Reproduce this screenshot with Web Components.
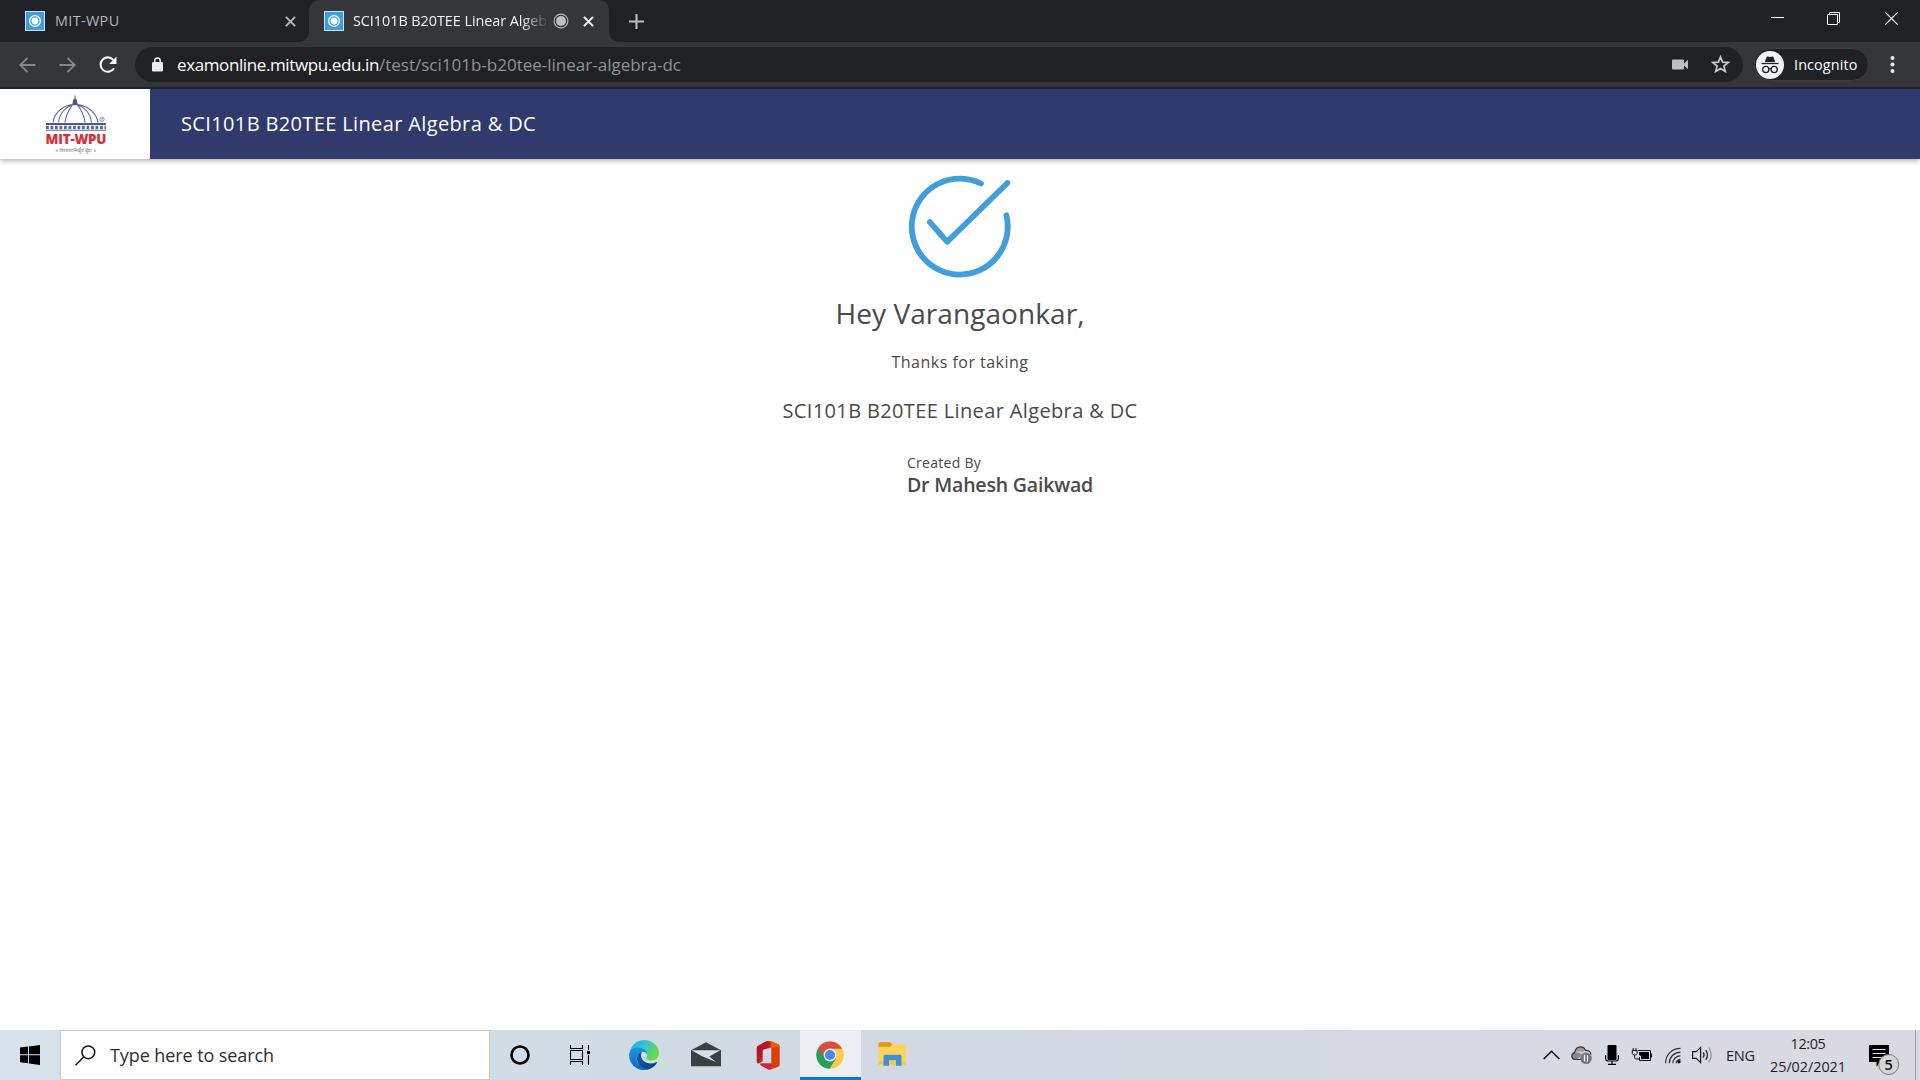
<!DOCTYPE html>
<html lang="en">
<head>
<meta charset="utf-8">
<title>SCI101B B20TEE Linear Algebra &amp; DC</title>
<style>
html,body{margin:0;height:100%;overflow:hidden;background:#fff}
body{font-family:"Open Sans","Noto Sans",sans-serif}
</style>
</head>
<body>
<desktop-screen></desktop-screen>
<script>
const define = (name, css, html) => customElements.define(name, class extends HTMLElement {
  constructor() {
    super();
    this.attachShadow({ mode: 'open' }).innerHTML =
      `<style>*{box-sizing:border-box}svg{display:block;flex:none;overflow:visible}${css}</style>${html}`;
  }
});

// One line of text, tracked so that it fills the width given in "w".
customElements.define('fit-text', class extends HTMLElement {
  constructor() {
    super();
    this.attachShadow({ mode: 'open' }).innerHTML =
      '<style>:host{display:inline-block;flex:none;white-space:nowrap}</style><slot></slot>';
  }
  connectedCallback() {
    const target = parseFloat(this.getAttribute('w'));
    if (!target) return;
    this.style.letterSpacing = '0px';
    this.style.width = 'max-content';
    const natural = this.getBoundingClientRect().width;
    this.style.letterSpacing = ((target - natural) / this.textContent.length).toFixed(3) + 'px';
    this.style.width = target + 'px';
  }
});

define('fav-icon', ':host{display:block;flex:none;width:20px;height:20px}',
`<svg width="20" height="20" viewBox="0 0 20 20"><rect x=".5" y=".5" width="19" height="19" fill="#3f9ddd" stroke="#c8e2f5"/><circle cx="10" cy="10" r="5.4" fill="none" stroke="#fff" stroke-width="1.3"/><circle cx="10" cy="10" r="3.4" fill="#fff"/></svg>`);

define('tab-close', ':host{display:block;flex:none;width:11px;height:11px}',
`<svg width="11" height="11" viewBox="0 0 11 11"><path d="M.9.9l9.2 9.2M10.100.9l-9.2 9.200" stroke="currentColor" stroke-width="2"/></svg>`);

define('tab-strip', `
:host{display:flex;height:42px;background:#202124;color:#b4b7bb;font-size:14.4px}
.tab{display:flex;align-items:center;height:42px;flex:none}
.tab fit-text{padding-bottom:1px}
.idle{width:309px;padding:0 13px 0 25px}
.idle fit-text{margin-left:10px;margin-right:auto}
.active{width:300px;background:#35363a;border-radius:10px 10px 0 0;color:#f2f3f4;padding:0 15px 0 15px;position:relative}
.active::before,.active::after{content:"";position:absolute;bottom:0;width:10px;height:10px}
.active::before{left:-10px;background:radial-gradient(circle at 0 0,#202124 9.500px,#35363a 10.2px)}
.active::after{right:-10px;background:radial-gradient(circle at 100% 0,#202124 9.500px,#35363a 10.2px)}
.title{width:193px;margin-left:9px;overflow:hidden;-webkit-mask-image:linear-gradient(90deg,#000 168px,transparent 196px);mask-image:linear-gradient(90deg,#000 168px,transparent 196px)}
.title fit-text{display:block}
.rec{margin-left:7px}
.active tab-close{margin-left:14px;color:#f4f5f6}
.plus{margin:14px 0 0 20px}
.win{display:flex;margin-left:auto;padding:12px 22px 0 0;gap:44px}
.win svg:first-child{margin-right:-1px}
.win svg:last-child{margin-left:1px}
`,
`<div class="tab idle"><fav-icon></fav-icon><fit-text w="64.500">MIT-WPU</fit-text><tab-close></tab-close></div>
<div class="tab active"><fav-icon></fav-icon><div class="title"><fit-text w="194">SCI101B B20TEE Linear Algeb</fit-text></div>
<svg class="rec" width="16" height="16" viewBox="0 0 16 16"><circle cx="8" cy="8" r="6.900" fill="none" stroke="#b8babd" stroke-width="1.1"/><circle cx="8" cy="8" r="5" fill="#bdc0c4"/></svg><tab-close></tab-close></div>
<svg class="plus" width="15" height="15" viewBox="0 0 15 15"><path d="M7.5 0v15M0 7.500h15" stroke="#babcbf" stroke-width="2.1"/></svg>
<div class="win">
<svg width="13" height="13" viewBox="0 0 13 13"><path d="M0 5.500h13" stroke="#fff"/></svg>
<svg width="13" height="13" viewBox="0 0 13 13" fill="none" stroke="#fff"><path d="M.5 2.500h10v10H.5zM2.500 2.500v-2h10v10h-2"/></svg>
<svg width="13" height="13" viewBox="0 0 13 13"><path d="M.3.3l12.400 12.400M12.700.3L.3 12.700" stroke="#fff" stroke-width="1.2"/></svg>
</div>`);

define('address-bar', `
:host{display:flex;align-items:center;height:47px;background:#35363a;border-bottom:2px solid #27282b;padding:0 24px 0 18px}
.back{margin-right:21px}.fwd{margin-right:22px}
.omni{display:flex;align-items:center;width:1608px;height:35px;border-radius:18px;background:#202124;margin-left:18px;padding:0 13px 0 17px;font-size:17px;color:#fff}
.omni .lock{margin-right:14px}
.path{color:#8f9296}
.cam{margin-left:auto;margin-right:23px}
.inc{display:flex;align-items:center;width:115px;height:33px;margin-left:11px;border:1px solid #3d3e42;border-radius:17px;background:#202124;color:#fff;font-size:14.4px;padding-left:1px}
.inc fit-text{margin-left:10px}
.dots{margin-left:auto}
`,
`<svg class="back" width="19" height="18" viewBox="0 0 19 18"><path d="M17.500 9H2.500M9.500 1.800L2.300 9l7.200 7.200" fill="none" stroke="#85878a" stroke-width="1.8"/></svg>
<svg class="fwd" width="19" height="18" viewBox="0 0 19 18"><path d="M1.500 9h15M9.500 1.800L16.700 9l-7.200 7.200" fill="none" stroke="#85878a" stroke-width="1.8"/></svg>
<svg width="18" height="18" viewBox="0 0 18 18"><path d="M15 12.200A7.200 7.200 0 1 1 14.500 4.200" fill="none" stroke="#f1f3f4" stroke-width="2.1"/><path d="M17.500.6v7.400h-7.400z" fill="#f1f3f4"/></svg>
<div class="omni">
<svg class="lock" width="11" height="15" viewBox="0 0 11 15"><rect y="5" width="11" height="9.500" rx="1.200" fill="#e8eaed"/><path d="M2.800 5.500V3.600a2.700 2.700 0 0 1 5.400 0v1.900" fill="none" stroke="#e8eaed" stroke-width="1.500"/></svg>
<fit-text w="202">examonline.mitwpu.edu.in</fit-text><fit-text class="path" w="302">/test/sci101b-b20tee-linear-algebra-dc</fit-text>
<svg class="cam" width="16" height="12" viewBox="0 0 16 12"><path d="M1 .5h10q1 0 1 1v3l4-3.800v9.600l-4-3.800v3q0 1-1 1H1q-1 0-1-1v-8q0-1 1-1z" fill="#bfbfbf"/></svg>
<svg width="19" height="19" viewBox="0 0 19 19"><path d="M9.500 2l2.100 5.100 5.600.4-4.300 3.600 1.400 5.400-4.800-2.900-4.800 2.900 1.400-5.400L1.800 7.500l5.600-.4z" fill="none" stroke="#c8c9cb" stroke-width="1.700"/></svg>
</div>
<div class="inc"><svg width="28" height="28" viewBox="0 0 28 28"><circle cx="14" cy="14" r="14" fill="#f1f3f4"/><path d="M8.800 11l1.800-5q.3-.8 1.100-.5 2.300.8 4.600 0 .8-.3 1.100.5l1.800 5z" fill="#202124"/><path d="M5.500 12.500h17" stroke="#202124" stroke-width="1.300"/><g fill="none" stroke="#202124" stroke-width="1.300"><circle cx="9.800" cy="18.500" r="3.100"/><circle cx="18.200" cy="18.500" r="3.100"/><path d="M12.800 18q1.200-.9 2.400 0"/></g></svg><fit-text w="63.500">Incognito</fit-text></div>
<svg class="dots" width="7" height="19" viewBox="0 0 7 19" fill="#e8eaed"><circle cx="3.500" cy="3" r="2"/><circle cx="3.500" cy="9.500" r="2"/><circle cx="3.500" cy="16" r="2"/></svg>`);

define('mit-logo', ':host{display:block;flex:none;width:150px;height:70px;background:#fff}',
`<svg width="150" height="70" viewBox="0 89 150 70">
<g fill="none" stroke="#5c6a9a" stroke-width="1.100"><path d="M53 122.500C54 114 62 104.500 75 104.500S97 114 98 122.500M58.500 122.500C59.500 113 66 106 75 104.500M91.500 122.500C90.500 113 84 106 75 104.500M65 122.500C66 113 70.500 108 72.500 104.500M85 122.500C84 113 79.500 108 77.500 104.500"/></g>
<path d="M75 95.500v4" stroke="#49588c" stroke-width="1"/><path d="M73.500 99h3l1.300 5.500h-5.600z" fill="#49588c"/>
<path d="M46 124h60" stroke="#4b5990" stroke-width="1.800"/><path d="M46 127.500h60" stroke="#5a689b" stroke-width="3.600" stroke-dasharray="2.800 1.700"/><path d="M46 130.300h60" stroke="#6975a4" stroke-width="1"/>
<circle cx="102" cy="119.300" r="2.200" fill="none" stroke="#66719f" stroke-width=".7"/><text x="102" y="120.700" font-family="Open Sans,sans-serif" font-size="3.600" text-anchor="middle" fill="#66719f">R</text>
<text x="45.500" y="143.900" font-family="Open Sans,sans-serif" font-weight="800" font-size="13.400" fill="#d8303a" textLength="61" lengthAdjust="spacing">MIT-WPU</text>
<text x="55" y="152.300" font-family="Noto Sans,sans-serif" font-size="4.600" fill="#777" textLength="41" lengthAdjust="spacingAndGlyphs">॥ विश्वशान्तिर्ध्रुवं ध्रुवा ॥</text>
</svg>`);

define('page-header', `
:host{display:flex;align-items:center;height:70px;background:#303a6c;color:#fff;font-size:20px;box-shadow:0 1px 6px rgba(0,0,0,.4);position:relative}
fit-text{margin-left:31px;line-height:28px;padding-bottom:1px}`,
`<mit-logo></mit-logo><fit-text w="355">SCI101B B20TEE Linear Algebra &amp; DC</fit-text>`);

define('thank-you', `
:host{display:flex;flex-direction:column;align-items:center;flex:1;background:#fff;color:#4a4a4a;padding-top:13px}
.hey{font-size:28px;line-height:40px;margin-top:11px}
.thanks{font-size:16px;line-height:24px;margin-top:17px}
.test{font-size:20px;line-height:30px;margin-top:22px}
.by{display:flex;flex-direction:column;align-items:flex-start;width:187px;margin:27px 0 0 81px}
.by .label{font-size:14px;line-height:20px}
.by .name{font-size:19.500px;line-height:24px;font-weight:600}`,
`<svg width="110" height="110" viewBox="905.400 172.200 110 110"><g fill="none" stroke="#429ddc" stroke-width="5.800" stroke-linecap="round" stroke-linejoin="round"><path d="M981.300 183.700A48 48 0 1 0 1006.800 215.500"/><path d="M930.300 222.300l17.300 19.700L1007.800 183.200"/></g></svg>
<fit-text class="hey" w="249">Hey Varangaonkar,</fit-text>
<fit-text class="thanks" w="137">Thanks for taking</fit-text>
<fit-text class="test" w="355">SCI101B B20TEE Linear Algebra &amp; DC</fit-text>
<div class="by"><fit-text class="label" w="74">Created By</fit-text><fit-text class="name" w="186">Dr Mahesh Gaikwad</fit-text></div>`);

define('search-box', `
:host{display:flex;align-items:center;flex:none;width:430px;height:50px;background:#fff;border:1px solid #c8c9cb;padding-left:14px;font-size:18px;color:#2e2e2e}
fit-text{margin-left:14px;padding-bottom:1px}`,
`<svg width="21" height="21" viewBox="0 0 21 21"><circle cx="13.300" cy="7.300" r="6.400" fill="none" stroke="#111" stroke-width="1.500"/><path d="M8.700 11.900L.6 20.200" stroke="#111" stroke-width="1.500"/></svg><fit-text w="164">Type here to search</fit-text>`);

define('task-apps', `
:host{display:flex;height:50px}
div{display:flex;align-items:center;justify-content:center;height:50px;width:62px}
.on{width:61px;background:#ebeff3;border-bottom:3px solid #0078d7;padding-top:3px}
.on svg{margin-right:2px}`,
`<div style="width:60px"><svg width="20" height="20" viewBox="0 0 20 20"><circle cx="10" cy="10" r="8.500" fill="none" stroke="#000" stroke-width="2.600"/></svg></div>
<div style="width:60px"><svg width="20" height="20" viewBox="0 0 20 20" fill="none" stroke="#000" stroke-width="1.100"><path d="M.5 0v3.500h12V0M.5 20v-3.500h12V20M.5 5.500h12v9H.5zM18.500 0v5M18.500 10v10"/><path d="M17 6h3v3h-3z" fill="#000" stroke="none"/></svg></div>
<div style="width:68px"><svg width="30" height="30" viewBox="0 0 30 30"><defs><linearGradient id="a" x2="1" y2=".35"><stop stop-color="#2aa7e8"/><stop offset=".5" stop-color="#35c3d8"/><stop offset="1" stop-color="#66dc48"/></linearGradient><linearGradient id="b" y2="1" x2=".3"><stop stop-color="#1b9de2"/><stop offset="1" stop-color="#0767c0"/></linearGradient><linearGradient id="c" x2="1" y2=".5"><stop stop-color="#0c5dad"/><stop offset="1" stop-color="#0b4584"/></linearGradient></defs>
<path d="M1 12C2 5 8 0 15 0c8.500 0 15 6.500 15 13 0 4.500-3.300 7.500-7.500 7.500-3.500 0-5.500-1.200-5.500-2.300 0-.7 1.200-1.200 1.200-3.200 0-3-2.800-5.700-7-6.500C7 7.800 3 9 1 12z" fill="url(#a)"/>
<path d="M0 15C.2 10 4 7.600 8.800 7.600c5 0 9.300 3 9.400 7.100-.7-2-2.600-3.200-4.900-3-3.800.4-6 4-5.500 8 .6 5 5 9 9.700 10C8 31.500 0 24 0 15z" fill="url(#b)"/>
<path d="M13 11.800C9.800 12.300 7.600 15.500 8 19.700c.6 5.500 5.600 10.100 10.400 10 4-.7 7.500-3.300 9.400-6.700.4-.7-.2-1.100-.8-.8-6.500 3-14.200 0-14.900-6-.1-1.900.3-3.400.9-4.400z" fill="url(#c)"/></svg></div>
<div style="width:56px"><svg width="30" height="24" viewBox="0 .8 30 24"><path d="M0 8L15 0l15 8v16H0z" fill="#3a3f42"/><path d="M.6 8h28.800L18.300 14.200l6.800 5.600L10.500 13.800z" fill="#d8e0e6"/></svg></div>
<div style="width:66px"><svg width="23" height="29" viewBox="-.7 0 23 29"><defs><linearGradient id="o" y2="1"><stop stop-color="#a90f12"/><stop offset=".5" stop-color="#b91b29"/><stop offset="1" stop-color="#e36fb0"/></linearGradient></defs><path d="M0 7.300C0 6 .6 5.200 1.700 4.600L9.500.3C11 -.3 13 0 14.500.5L16 6 7.300 8.500C6.300 8.800 6 9.300 6 10.200v10.300L1.800 22.400C.6 22.600 0 21.800 0 20.500z" fill="url(#o)"/><path d="M12 .1l9 2.800C22.300 3.300 23 4 23 5.500v17.800c0 1.500-.6 2.300-2 2.800L13.600 28.500l1-5.800V6.200z" fill="#df3c08"/><path d="M14.600 6.200V0L21 2.900l2 3z" fill="#e8650c"/><path d="M4.300 22.300H15V28c-1.500 1-3 .8-4.500 0l-6-3.300C3 23.800 3 22.300 4.300 22.300z" fill="#cf2635"/></svg></div>
<div class="on"><svg width="28" height="28" viewBox="0 0 28 28"><circle cx="14" cy="14" r="13.700" fill="#fbcb43"/><path d="M14 14L2.100 7.100A13.700 13.700 0 0 0 13.500 27.700L20 17.500z" fill="#21a05c"/><path d="M2.100 7.100A13.700 13.700 0 0 1 26 7.800H14v6L8.700 17z" fill="#da4c40"/><circle cx="14" cy="14" r="6.400" fill="#f4f6f8"/><circle cx="14" cy="14" r="5.100" fill="#4a87ee"/></svg></div>
<div><svg width="28" height="24" viewBox="0 .8 28 24"><path d="M.5 1Q.5 0 1.500 0H12l3 3v3H.5z" fill="#dd9b08"/><path d="M.5 4.500H12L14.500 2H27q1 0 1 1v19.500H.5z" fill="#fed45c"/><path d="M.5 19H28v3.500H.5z" fill="#f9c741"/><path d="M5.500 23.500V14q0-1.500 1.500-1.500h15q1.500 0 1.500 1.500v9.500h-5.500v-5.500h-7v5.500z" fill="#3b92d8"/></svg></div>`);

define('system-tray', `
:host{display:flex;align-items:center;height:50px;margin-left:auto;color:#1e1e22}
.lang{font-size:14.600px;margin-left:13px}
.clock{display:flex;flex-direction:column;align-items:center;width:76px;margin-left:15px;font-size:14.400px;line-height:23px}
.peek{width:5px;height:50px;border-left:1px solid #9fa2aa;margin-left:15px}`,
`<svg width="17" height="10" viewBox="0 0 17 10"><path d="M.7 9L8.500 1.200 16.300 9" fill="none" stroke="#111" stroke-width="1.500"/></svg>
<svg style="margin-left:11px" width="21" height="18" viewBox="0 0 21 18"><path d="M4 13.500a3.500 3.500 0 0 1-.4-6.900C4.300 3.300 6.500.8 9.500.8c2.500 0 4.200 1.300 5 3.500 3.200-.2 5.500 1.600 5.500 4.400s-1.500 4.800-4 4.800z" fill="#cdcdd1"/><path d="M3.600 7C6 5.500 8.500 6.500 10.500 9L6 13.500H4C.2 12.500.2 8 3.600 7z" fill="#87878b"/><path d="M3.600 6.600C4.300 3.300 6.500.8 9.500.8c2.500 0 4.200 1.300 5 3.500l-3 1.700C9 5 6 5 3.600 6.600z" fill="#9b9b9f"/><path d="M10 13.500H4a3.500 3.500 0 0 1-.4-6.900C4.300 3.300 6.500.8 9.500.8c2.500 0 4.200 1.300 5 3.500 3.200-.2 5.500 1.600 5.500 4.400" fill="none" stroke="#333" stroke-width="1.200"/><circle cx="15" cy="12.300" r="5.800" fill="#77777a"/><path d="M13.500 9v6.600M16.500 9v6.600" stroke="#fff" stroke-width="1.200"/></svg>
<svg style="margin-left:12.500px" width="14" height="20" viewBox="0 0 14 20"><rect x="2.500" y="0" width="9" height="15" rx="1" fill="#000"/><path d="M.6 10v3.500q0 2.500 2.500 2.500h7.800q2.500 0 2.500-2.500V10M7 16v3.300M3 19.300h8" fill="none" stroke="#000" stroke-width="1.200"/></svg>
<svg style="margin-left:13.500px" width="20" height="14" viewBox="0 0 20 14"><path d="M5.800 2.500h12.700v10H7.500V9" fill="none" stroke="#111" stroke-width="1"/><path d="M7 4h10v7H9V8L7 7z" fill="#000"/><path d="M18.500 5.500H20v4h-1.500z" fill="#111"/><path d="M1.200 0v2.500M4 0v2.500M.3 2.500h4.800v3L3.700 7H1.600L.3 5.500zM2.600 7v2.500q0 1.500 1.500 1.500H7" fill="none" stroke="#111" stroke-width="1"/></svg>
<svg style="margin-left:13px" width="16" height="16" viewBox="0 -.8 16 16"><g fill="none" stroke="#333" stroke-width="1.200"><path d="M.6 15.500C.6 7 7 .6 15.500.6M4.300 15.500C4.300 9.500 9 4.500 15.500 4.300M7.800 15.500c0-4 3.500-7.500 7.700-7.500M11.200 15.500q-.2-3.500 4.300-4"/></g><circle cx="14" cy="14" r="1.700" fill="#111"/></svg>
<svg style="margin-left:11px" width="21" height="18" viewBox="0 0 21 18"><path d="M.6 5.700h3.600L8.600 1.500v15L4.200 12.300H.6z" fill="none" stroke="#111" stroke-width="1.200"/><g fill="none" stroke-width="1.300"><path d="M11.200 6.500q1.800 2.500 0 5M13.800 4.200q3.300 4.800 0 9.600" stroke="#222"/><path d="M16.800 1.500q4.800 7.500 0 15" stroke="#96969c"/></g></svg>
<fit-text class="lang" w="29">ENG</fit-text>
<div class="clock"><fit-text w="35">12:05</fit-text><fit-text w="76">25/02/2021</fit-text></div>
<svg style="margin:10px 0 0 23px" width="31" height="30" viewBox="0 0 31 30"><path d="M0 0h20v17h-8l-4.500 4.500V17H0z" fill="#000"/><path d="M3.500 4.500h13M3.500 8.500h13M3.500 12.500h9" stroke="#e4e4ea" stroke-width="1.200"/><circle cx="19.700" cy="19.500" r="10" fill="#d5d6d9" stroke="#77777b"/><text x="19.700" y="24.800" text-anchor="middle" font-family="Open Sans,sans-serif" font-weight="600" font-size="14.500" fill="#111">5</text></svg>
<div class="peek"></div>`);

define('task-bar', `
:host{display:flex;height:50px;flex:none;background:linear-gradient(90deg,#d6e3ea 0,#d1dde5 500px,#d1d8e2 850px,#d7dae3 1400px,#dad9e2 1920px)}
.start{width:60px;height:50px;display:flex;align-items:center;justify-content:center}`,
`<div class="start"><svg width="20" height="20" viewBox="0 0 20 20"><path d="M0 2.600L8.100 1.500v7.800H0zM9 1.400L20 0v9.300H9zM0 10.300h8.100v8L0 17.300zM9 10.300h11V20L9 18.500z"/></svg></div><search-box></search-box><task-apps></task-apps><system-tray></system-tray>`);

define('desktop-screen', ':host{display:flex;flex-direction:column;width:1920px;height:1080px;overflow:hidden}',
'<tab-strip></tab-strip><address-bar></address-bar><page-header></page-header><thank-you></thank-you><task-bar></task-bar>');
</script>
</body>
</html>
